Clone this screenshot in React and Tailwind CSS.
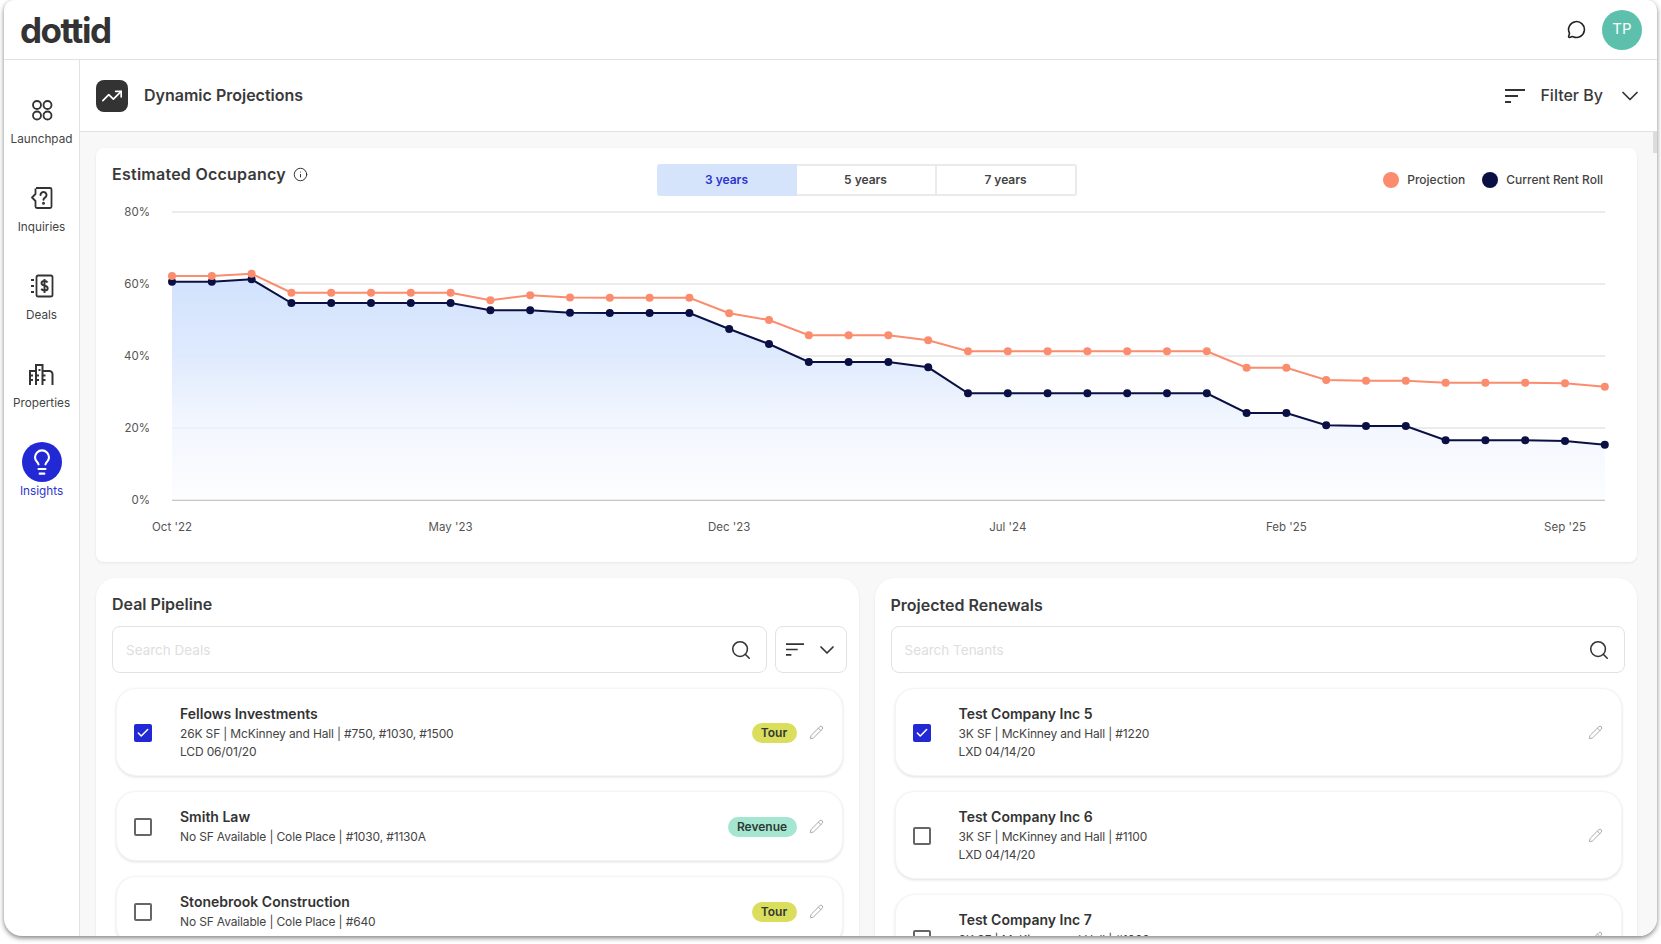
import { ChevronDown, Check, Info, Lightbulb, MessageCircle, Pencil, Search, TrendingUp } from 'lucide-react';

const projection = [276, 276, 273.7, 292.7, 292.7, 292.7, 292.7, 292.7, 300.3, 295.3, 297.5, 297.7, 297.7, 297.7, 313.3, 320, 335.3, 335.3, 335.3, 340.3, 351.3, 351.3, 351.3, 351.3, 351.3, 351.3, 351.3, 367.7, 367.7, 380, 380.7, 380.7, 382.7, 382.7, 382.7, 383.3, 386.7];
const rentRoll = [281.7, 281.7, 279.3, 303, 303, 303, 303, 303, 310.3, 310.3, 312.7, 313, 313, 313, 329, 344, 362, 362, 362, 367.3, 393.3, 393.3, 393.3, 393.3, 393.3, 393.3, 393.3, 413, 413, 425.3, 426, 426, 440.3, 440.3, 440.3, 441, 444.7];
const xAt = (i) => 172 + i * 39.8;
const toPoints = (arr) => arr.map((y, i) => `${xAt(i)},${y}`).join(' ');

const yTicks = [['80%', 212], ['60%', 284], ['40%', 356], ['20%', 428], ['0%', 500]];
const xTicks = [["Oct '22", 0], ["May '23", 7], ["Dec '23", 14], ["Jul '24", 21], ["Feb '25", 28], ["Sep '25", 35]];

const deals = [
  { name: 'Fellows Investments', lines: ['26K SF | McKinney and Hall | #750, #1030, #1500', 'LCD 06/01/20'], tag: 'Tour', checked: true },
  { name: 'Smith Law', lines: ['No SF Available | Cole Place | #1030, #1130A'], tag: 'Revenue' },
  { name: 'Stonebrook Construction', lines: ['No SF Available | Cole Place | #640'], tag: 'Tour' },
];

const renewals = [
  { name: 'Test Company Inc 5', lines: ['3K SF | McKinney and Hall | #1220', 'LXD 04/14/20'], checked: true },
  { name: 'Test Company Inc 6', lines: ['3K SF | McKinney and Hall | #1100', 'LXD 04/14/20'] },
  { name: 'Test Company Inc 7', lines: ['3K SF | McKinney and Hall | #1000', 'LXD 04/14/20'] },
];

function FilterLines({ className }) {
  return (
    <svg className={className} viewBox="0 0 20 14" fill="none" stroke="currentColor" strokeWidth="1.8">
      <path d="M0 1h20M0 7h13M0 13h6" />
    </svg>
  );
}

function LaunchpadIcon() {
  return (
    <svg width="22" height="22" viewBox="0 0 22 22" fill="none" stroke="#333" strokeWidth="1.8">
      <circle cx="6" cy="6" r="4" />
      <circle cx="16.5" cy="6" r="4" />
      <circle cx="6" cy="16.5" r="4" />
      <circle cx="16.5" cy="16.5" r="4" />
    </svg>
  );
}

function InquiriesIcon() {
  return (
    <svg width="24" height="24" viewBox="0 0 24 24" fill="none" stroke="#333" strokeWidth="1.8" strokeLinejoin="round">
      <path d="M6 2h14a1.5 1.5 0 0 1 1.5 1.5v17a1.5 1.5 0 0 1-1.5 1.5H7a1.5 1.5 0 0 1-1.5-1.5V15L2 11.5 5.5 8V2.5" />
      <path d="M10.5 9a3 3 0 1 1 4.5 2.6c-1 .6-1.5 1-1.5 2.2" strokeLinecap="round" strokeWidth="2" />
      <circle cx="13.5" cy="17.2" r="0.6" fill="#333" />
    </svg>
  );
}

function DealsIcon() {
  return (
    <svg width="24" height="24" viewBox="0 0 24 24" fill="none" stroke="#333" strokeWidth="1.8">
      <rect x="6.5" y="1.5" width="16" height="21" rx="1.8" />
      <path d="M1 6h3M1 12h3M1 18h3" strokeWidth="2" />
      <path d="M17.5 8.5c-.5-1-1.5-1.5-3-1.5-1.8 0-3 .9-3 2.3 0 3.2 6.2 1.6 6.2 4.9 0 1.4-1.3 2.3-3.1 2.3-1.6 0-2.7-.6-3.3-1.7M14.5 5v14" strokeWidth="1.9" />
    </svg>
  );
}

function PropertiesIcon() {
  return (
    <svg width="25" height="22" viewBox="0 0 25 22" fill="none" stroke="#333" strokeWidth="2">
      <path d="M1 22V8h6M7 22V2h6.5v20M13.5 8H20a3 3 0 0 1 3.5 3v11" />
      <path d="M1 12.5h3M1 17h3M7 12.5h3M7 17h3M13.5 12.5h3M13.5 17h3M9.5 7h2" />
    </svg>
  );
}

function NavItem({ label, icon, active }) {
  return (
    <div className="h-[88px] flex flex-col items-center">
      <div className="h-[44px] flex items-center justify-center">
        {active ? (
          <div className="w-10 h-10 rounded-full bg-[#2229d4] flex items-center justify-center">{icon}</div>
        ) : icon}
      </div>
      <div className={`mt-[-1px] text-[11.75px] leading-[16px] ${active ? 'text-[#2d35cf]' : 'text-[#444]'}`}>{label}</div>
    </div>
  );
}

function Checkbox({ checked }) {
  if (checked) {
    return (
      <div className="w-[18px] h-[18px] shrink-0 rounded-[2px] bg-[#2229d4] flex items-center justify-center">
        <Check size={14} color="#fff" strokeWidth={2.6} />
      </div>
    );
  }
  return <div className="w-[18px] h-[18px] shrink-0 rounded-[2px] border-2 border-[#666] bg-white" />;
}

function Tag({ label }) {
  const color = label === 'Tour' ? 'bg-[#dbde5c] w-[45px]' : 'bg-[#a4e6cf] w-[69px]';
  return (
    <span className={`h-5 rounded-full ${color} flex items-center justify-center text-[12px] font-semibold text-[#2f3a36]`}>
      {label}
    </span>
  );
}

function ItemCard({ item }) {
  return (
    <div className="shrink-0 flex items-center rounded-[20px] bg-white border border-[#f5f5f5] shadow-[0_1px_3px_rgba(0,0,0,0.12)] pl-[17px] pr-[18px] pt-[15px] pb-[14px]">
      <Checkbox checked={item.checked} />
      <div className="ml-7 flex-1">
        <div className="text-[14px] leading-[20px] font-semibold text-[#333]">{item.name}</div>
        <div className="mt-[1px]">
          {item.lines.map((line) => (
            <div key={line} className="text-[12px] leading-[18px] tracking-[-0.15px] text-[#444]">{line}</div>
          ))}
        </div>
      </div>
      {item.tag && <Tag label={item.tag} />}
      <Pencil size={15} color="#aaa" strokeWidth={1.6} className="ml-3" />
    </div>
  );
}

function SearchBox({ placeholder }) {
  return (
    <div className="flex-1 h-[47px] flex items-center rounded-lg border border-[#e2e2e2] bg-white pl-[13px] pr-[14px]">
      <input
        placeholder={placeholder}
        className="flex-1 min-w-0 pt-[1px] text-[13.5px] outline-none bg-transparent placeholder:text-[#dedede]"
      />
      <Search size={22} color="#333" strokeWidth={1.7} />
    </div>
  );
}

function OccupancyChart() {
  const area = `172,500 ${toPoints(rentRoll)} 1605,500`;
  return (
    <svg width="1541" height="340" viewBox="96 200 1541 340" className="block">
      <defs>
        <linearGradient id="occ" x1="0" y1="0" x2="0" y2="1">
          <stop offset="0" stopColor="#d2e2fd" stopOpacity="1" />
          <stop offset="0.35" stopColor="#dde9fd" stopOpacity="0.95" />
          <stop offset="0.67" stopColor="#eef3fe" stopOpacity="0.7" />
          <stop offset="1" stopColor="#fafcff" stopOpacity="0.7" />
        </linearGradient>
      </defs>
      {yTicks.map(([label, y]) => (
        <g key={label}>
          <line x1="172" x2="1605" y1={y} y2={y} stroke={label === '0%' ? '#b5b5b5' : '#e4e4e4'} strokeWidth="1.5" />
          <text x="150" y={y + 4} textAnchor="end" fontSize="11.5" fill="#555">{label}</text>
        </g>
      ))}
      {xTicks.map(([label, i]) => (
        <text key={label} x={xAt(i)} y="531" textAnchor="middle" fontSize="11.5" fill="#555">{label}</text>
      ))}
      <polygon points={area} fill="url(#occ)" />
      <polyline points={toPoints(rentRoll)} fill="none" stroke="#0b1044" strokeWidth="2" />
      {rentRoll.map((y, i) => <circle key={i} cx={xAt(i)} cy={y} r="4" fill="#0b1044" />)}
      <polyline points={toPoints(projection)} fill="none" stroke="#fb8c6e" strokeWidth="2" />
      {projection.map((y, i) => <circle key={i} cx={xAt(i)} cy={y} r="4" fill="#fb8c6e" />)}
    </svg>
  );
}

export default function App() {
  return (
    <div className="h-[944px] bg-white pl-1 pr-1 pb-2 overflow-hidden [font-family:Inter,sans-serif]">
      <div className="relative h-full flex flex-col overflow-hidden bg-white rounded-b-[18px] rounded-t-[10px] shadow-[0_2px_5px_rgba(0,0,0,0.5)]">
        <div className="h-[60px] shrink-0 flex items-center justify-between border-b border-[#e2e2e2] pl-4 pr-[15px]">
          <div className="text-[35px] leading-none font-bold tracking-[-1.5px] text-[#333] pt-[1px]">dottid</div>
          <div className="flex items-center gap-4">
            <MessageCircle size={19} color="#222" strokeWidth={2} />
            <div className="w-10 h-10 rounded-full bg-[#5cc0ad] flex items-center justify-center text-[15px] text-white">TP</div>
          </div>
        </div>

        <div className="flex-1 flex min-h-0">
          <div className="w-[76px] shrink-0 border-r border-[#e2e2e2] pt-7">
            <NavItem label="Launchpad" icon={<LaunchpadIcon />} />
            <NavItem label="Inquiries" icon={<InquiriesIcon />} />
            <NavItem label="Deals" icon={<DealsIcon />} />
            <NavItem label="Properties" icon={<PropertiesIcon />} />
            <NavItem label="Insights" active icon={<Lightbulb size={28} color="#fff" strokeWidth={1.8} />} />
          </div>

          <div className="flex-1 flex flex-col min-w-0">
            <div className="h-[72px] shrink-0 flex items-center justify-between border-b border-[#e2e2e2] pl-4 pr-5">
              <div className="flex items-center gap-4">
                <div className="w-8 h-8 rounded-lg bg-[#333] flex items-center justify-center">
                  <TrendingUp size={22} color="#fff" strokeWidth={1.8} />
                </div>
                <div className="text-[16px] font-semibold text-[#3a3a3a] pb-[1px]">Dynamic Projections</div>
              </div>
              <div className="flex items-center">
                <FilterLines className="w-5 h-[14px] text-[#333]" />
                <div className="ml-[15px] text-[16px] font-medium text-[#3a3a3a] pb-[1px]">Filter By</div>
                <ChevronDown size={28} color="#333" strokeWidth={1.5} className="ml-[13px] mr-[-7px]" />
              </div>
            </div>

            <div className="flex-1 min-h-0 overflow-hidden bg-[#f8f8f8] pt-4 pl-4 pr-5">
              <div className="h-[414px] rounded-lg bg-white shadow-[0_1px_3px_rgba(0,0,0,0.08)]">
                <div className="h-[52px] grid grid-cols-[1fr_auto_1fr] pt-4">
                  <div className="pl-4 flex items-center gap-[7px] h-[20px]">
                    <span className="text-[16px] tracking-[0.25px] font-semibold text-[#3a3a3a]">Estimated Occupancy</span>
                    <Info size={15} color="#333" strokeWidth={1.6} />
                  </div>
                  <div className="flex h-[32px] text-[12px] font-semibold text-[#444]">
                    <div className="w-[140px] flex items-center justify-center rounded-l-[3px] bg-[#d6e4fb] text-[#2d35cf]">3 years</div>
                    <div className="w-[140px] flex items-center justify-center border-y-2 border-r-2 border-[#eaeaea]">5 years</div>
                    <div className="w-[140px] flex items-center justify-center rounded-r-[3px] border-y-2 border-r-2 border-[#eaeaea]">7 years</div>
                  </div>
                  <div className="flex justify-end items-center h-[32px] pr-[34px] text-[12px] font-medium text-[#444]">
                    <div className="w-4 h-4 rounded-full bg-[#fb8c6e]" />
                    <span className="ml-2">Projection</span>
                    <div className="w-4 h-4 rounded-full bg-[#0b1044] ml-[17px]" />
                    <span className="ml-2">Current Rent Roll</span>
                  </div>
                </div>
                <OccupancyChart />
              </div>

              <div className="grid grid-cols-2 gap-4 mt-4 h-[400px]">
                <div className="rounded-t-[20px] bg-white shadow-[0_1px_3px_rgba(0,0,0,0.08)] pt-4 pl-4 pr-3">
                  <div className="h-8 text-[16px] leading-[20px] font-semibold text-[#3a3a3a]">Deal Pipeline</div>
                  <div className="flex gap-2 mb-[15px]">
                    <SearchBox placeholder="Search Deals" />
                    <div className="w-[72px] h-[47px] flex items-center rounded-lg border border-[#e2e2e2] pl-[10px]">
                      <FilterLines className="w-[18px] h-[13px] text-[#333]" />
                      <ChevronDown size={24} color="#333" strokeWidth={1.7} className="ml-[11px]" />
                    </div>
                  </div>
                  <div className="flex flex-col gap-[15px] mx-1">
                    {deals.map((d) => <ItemCard key={d.name} item={d} />)}
                  </div>
                </div>

                <div className="rounded-t-[20px] bg-white shadow-[0_1px_3px_rgba(0,0,0,0.08)] pt-4 pl-4 pr-3">
                  <div className="h-8 text-[16px] leading-[23px] font-semibold text-[#3a3a3a]">Projected Renewals</div>
                  <div className="flex mb-[15px]">
                    <SearchBox placeholder="Search Tenants" />
                  </div>
                  <div className="flex flex-col gap-[15px] ml-1 mr-[3px]">
                    {renewals.map((r) => <ItemCard key={r.name} item={r} />)}
                  </div>
                </div>
              </div>
            </div>
          </div>
        </div>

        <div className="absolute right-0 top-[132px] w-1 h-[21px] bg-[#dcdcdc]" />
      </div>
    </div>
  );
}
